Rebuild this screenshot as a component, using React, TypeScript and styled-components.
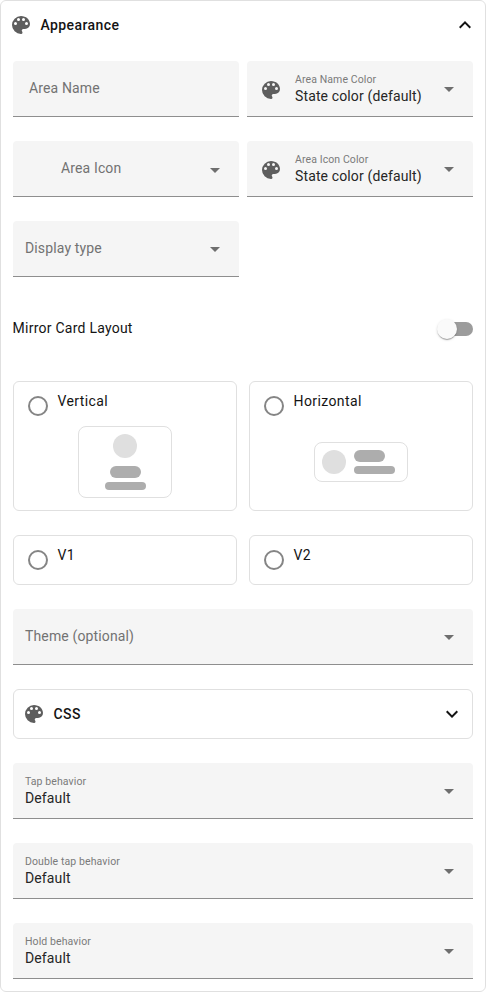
import React from "react";
import styled, { createGlobalStyle, css } from "styled-components";

const PALETTE =
  "M17.5,12A1.5,1.5 0 0,1 16,10.5A1.5,1.5 0 0,1 17.5,9A1.5,1.5 0 0,1 19,10.5A1.5,1.5 0 0,1 17.5,12M14.5,8A1.5,1.5 0 0,1 13,6.5A1.5,1.5 0 0,1 14.5,5A1.5,1.5 0 0,1 16,6.5A1.5,1.5 0 0,1 14.5,8M9.5,8A1.5,1.5 0 0,1 8,6.5A1.5,1.5 0 0,1 9.5,5A1.5,1.5 0 0,1 11,6.5A1.5,1.5 0 0,1 9.5,8M6.5,12A1.5,1.5 0 0,1 5,10.5A1.5,1.5 0 0,1 6.5,9A1.5,1.5 0 0,1 8,10.5A1.5,1.5 0 0,1 6.5,12M12,3A9,9 0 0,0 3,12A9,9 0 0,0 12,21A1.5,1.5 0 0,0 13.5,19.5C13.5,19.11 13.35,18.76 13.11,18.5C12.88,18.23 12.73,17.88 12.73,17.5A1.5,1.5 0 0,1 14.23,16H16A5,5 0 0,0 21,11C21,6.58 16.97,3 12,3Z";
const CHEVRON_UP = "M7.41,15.41L12,10.83L16.59,15.41L18,14L12,8L6,14L7.41,15.41Z";
const CHEVRON_DOWN = "M7.41,8.58L12,13.17L16.59,8.58L18,10L12,16L6,10L7.41,8.58Z";
const MENU_DOWN = "M7,10L12,15L17,10H7Z";

const GlobalStyle = createGlobalStyle`
  *, *::before, *::after { box-sizing: border-box; }
  body {
    margin: 0;
    background: #fff;
    color: #141414;
    font-family: Roboto, "Noto Sans", sans-serif;
    font-size: 14px;
    line-height: 20px;
  }
`;

const Panel = styled.section`
  width: 486px;
  height: 992px;
  border: 1px solid #e0e0e0;
  border-radius: 6px;
  overflow: hidden;
`;

const Header = styled.header`
  display: flex;
  align-items: center;
  height: 48px;
  padding: 0 8px;
  font-weight: 500;
`;

const HeaderTitle = styled.span`
  flex: 1;
  margin-left: 7.5px;
  letter-spacing: 0.4px;
`;

const SubPanel = styled.section`
  border: 1px solid #e0e0e0;
  border-radius: 6px;
`;

const Content = styled.div`
  display: flex;
  flex-direction: column;
  gap: 24px;
  padding: 12px;
`;

const FieldGrid = styled.div`
  display: grid;
  grid-template-columns: 1fr 1fr;
  gap: 24px 8px;
`;

const OptionGrid = styled.div`
  display: grid;
  grid-template-columns: 1fr 1fr;
  gap: 24px 12px;
`;

const FieldBox = styled.div<{ $inset: number }>`
  display: flex;
  align-items: center;
  height: 56px;
  padding: 0 12px 0 ${(p) => p.$inset}px;
  background: #f5f5f5;
  border-bottom: 1px solid #8e8e8e;
  border-radius: 4px 4px 0 0;
`;

const FieldText = styled.div`
  display: flex;
  flex: 1;
  flex-direction: column;
  min-width: 0;
  white-space: nowrap;
`;

const Placeholder = styled.span`
  padding-bottom: 2px;
  color: #727272;
  letter-spacing: 0.14px;
`;

const FloatingLabel = styled.span`
  padding-top: 2px;
  color: #7a7a7a;
  font-size: 10.5px;
  line-height: 14px;
  letter-spacing: 0.1px;
`;

const Value = styled.span`
  margin-top: -1px;
  color: #262626;
  letter-spacing: 0.13px;
`;

const Svg = styled.svg<{ $tone: "icon" | "arrow" | "dark"; $drop?: number }>`
  display: block;
  flex: none;
  width: 24px;
  height: 24px;
  fill: ${(p) => ({ icon: "#5e5e5e", arrow: "#6e6e6e", dark: "#141414" })[p.$tone]};
  margin-top: ${(p) => p.$drop ?? 0}px;
`;

const LeadingIcon = styled.span`
  margin-right: 12px;
`;

const ToggleRow = styled.div`
  display: flex;
  align-items: center;
  justify-content: space-between;
  height: 56px;
  letter-spacing: 0.24px;
`;

const ToggleLabel = styled.span`
  padding-bottom: 2px;
  margin-left: -0.4px;
`;

const Track = styled.span`
  display: flex;
  align-items: center;
  width: 32px;
  height: 14px;
  border-radius: 7px;
  background: #9c9c9c;
`;

const Thumb = styled.span`
  flex: none;
  width: 20px;
  height: 20px;
  margin-left: -4px;
  border-radius: 50%;
  background: #fafafa;
  box-shadow: 0 2px 1px -1px rgba(0, 0, 0, 0.2), 0 1px 1px rgba(0, 0, 0, 0.14),
    0 1px 3px rgba(0, 0, 0, 0.12);
`;

const Option = styled.label<{ $tall?: boolean }>`
  display: flex;
  flex-direction: column;
  height: ${(p) => (p.$tall ? 130 : 50)}px;
  border: 1px solid #e0e0e0;
  border-radius: 6px;
`;

const OptionHead = styled.span`
  display: flex;
  align-items: flex-start;
  gap: 9.5px;
  padding: 9px 14px 0;
  letter-spacing: 0.4px;
`;

const Radio = styled.span`
  width: 20px;
  height: 20px;
  margin-top: 5px;
  border: 2px solid #858585;
  border-radius: 50%;
`;

const PreviewArea = styled.span`
  display: flex;
  flex: 1;
  align-items: center;
  justify-content: center;
  padding-bottom: 2px;
`;

const Preview = styled.span<{ $vertical?: boolean }>`
  display: flex;
  align-items: center;
  gap: 8px;
  width: 94px;
  padding: 7px;
  border: 1px solid #e0e0e0;
  border-radius: 8px;
  ${(p) =>
    p.$vertical &&
    css`
      flex-direction: column;
    `}
`;

const Avatar = styled.span`
  width: 24px;
  height: 24px;
  border-radius: 50%;
  background: #dfdfdf;
`;

const Lines = styled.span<{ $centered?: boolean }>`
  display: flex;
  flex-direction: column;
  align-items: ${(p) => (p.$centered ? "center" : "flex-start")};
  gap: 4px;
`;

const Line = styled.span<{ $secondary?: boolean }>`
  width: ${(p) => (p.$secondary ? 41 : 31)}px;
  height: ${(p) => (p.$secondary ? 8 : 12)}px;
  border-radius: 6px;
  background: #adadad;
`;

type IconProps = { path: string; tone: "icon" | "arrow" | "dark"; drop?: number };

const Icon = ({ path, tone, drop }: IconProps) => (
  <Svg viewBox="0 0 24 24" $tone={tone} $drop={drop} aria-hidden="true">
    <path d={path} />
  </Svg>
);

type FieldProps = {
  label: string;
  value?: string;
  inset?: number;
  palette?: boolean;
  arrow?: boolean;
  arrowDrop?: number;
};

const Field = ({ label, value, inset = 12, palette, arrow = true, arrowDrop = 1 }: FieldProps) => (
  <FieldBox $inset={inset}>
    {palette && (
      <LeadingIcon>
        <Icon path={PALETTE} tone="icon" drop={3} />
      </LeadingIcon>
    )}
    <FieldText>
      {value ? (
        <>
          <FloatingLabel>{label}</FloatingLabel>
          <Value>{value}</Value>
        </>
      ) : (
        <Placeholder>{label}</Placeholder>
      )}
    </FieldText>
    {arrow && <Icon path={MENU_DOWN} tone="arrow" drop={arrowDrop} />}
  </FieldBox>
);

const LayoutOption = ({ name, children }: { name: string; children?: React.ReactNode }) => (
  <Option $tall={!!children}>
    <OptionHead>
      <Radio />
      <span>{name}</span>
    </OptionHead>
    {children && <PreviewArea>{children}</PreviewArea>}
  </Option>
);

const CardPreview = ({ vertical }: { vertical?: boolean }) => (
  <Preview $vertical={vertical}>
    <Avatar />
    <Lines $centered={vertical}>
      <Line />
      <Line $secondary />
    </Lines>
  </Preview>
);

export default function App() {
  return (
    <>
      <GlobalStyle />
      <Panel>
        <Header>
          <Icon path={PALETTE} tone="icon" />
          <HeaderTitle>Appearance</HeaderTitle>
          <Icon path={CHEVRON_UP} tone="dark" />
        </Header>
        <Content>
          <FieldGrid>
            <Field label="Area Name" inset={16} arrow={false} />
            <Field label="Area Name Color" value="State color (default)" palette />
            <Field label="Area Icon" inset={48} arrowDrop={3} />
            <Field label="Area Icon Color" value="State color (default)" palette />
            <Field label="Display type" />
          </FieldGrid>
          <ToggleRow>
            <ToggleLabel>Mirror Card Layout</ToggleLabel>
            <Track>
              <Thumb />
            </Track>
          </ToggleRow>
          <OptionGrid>
            <LayoutOption name="Vertical">
              <CardPreview vertical />
            </LayoutOption>
            <LayoutOption name="Horizontal">
              <CardPreview />
            </LayoutOption>
            <LayoutOption name="V1" />
            <LayoutOption name="V2" />
          </OptionGrid>
          <Field label="Theme (optional)" />
          <SubPanel>
            <Header>
              <Icon path={PALETTE} tone="icon" />
              <HeaderTitle>CSS</HeaderTitle>
              <Icon path={CHEVRON_DOWN} tone="dark" />
            </Header>
          </SubPanel>
          <Field label="Tap behavior" value="Default" />
          <Field label="Double tap behavior" value="Default" />
          <Field label="Hold behavior" value="Default" />
        </Content>
      </Panel>
    </>
  );
}
